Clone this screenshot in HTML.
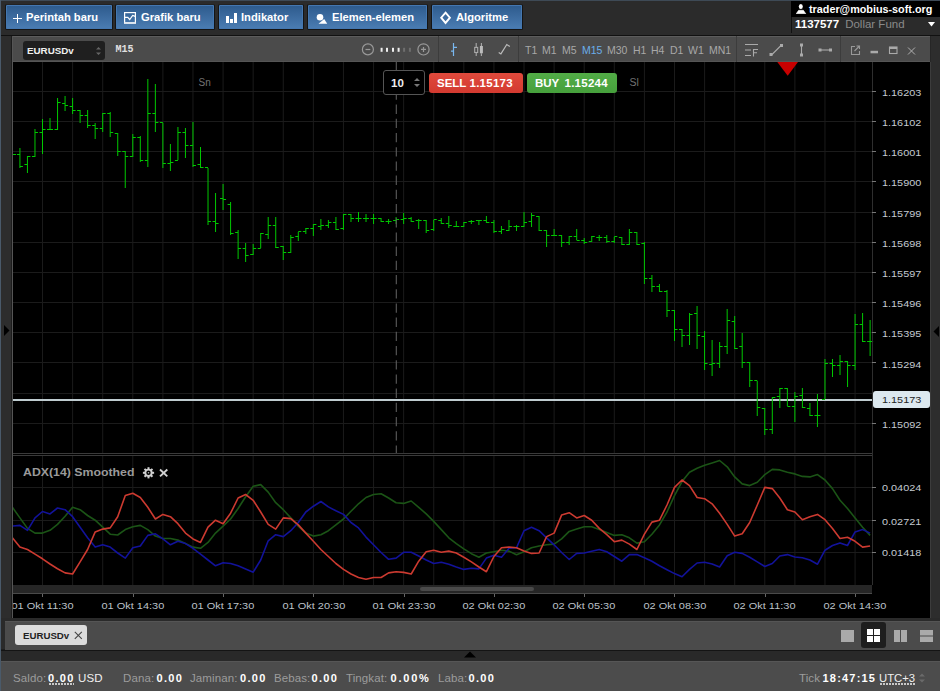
<!DOCTYPE html>
<html><head><meta charset="utf-8">
<style>
*{margin:0;padding:0;box-sizing:border-box}
html,body{width:940px;height:691px;overflow:hidden;background:#2b2b2b;font-family:"Liberation Sans", sans-serif}
.a{position:absolute}
.btn{position:absolute;top:4px;height:26px;border:1px solid #141414;border-top-color:#222;border-radius:2px;box-shadow:inset 0 0 0 1px #4477b0;background:linear-gradient(#2d5a8c,#4b7db3);color:#fff;font-weight:bold;font-size:11.2px;line-height:24px;white-space:nowrap}
.btn span{position:absolute;top:0}
.tf{position:absolute;top:44px;font-size:10.5px;color:#a8a8a8;line-height:12px}
.pl{position:absolute;left:882px;font-size:9.4px;color:#c4cad0;line-height:12px;transform:scaleX(1.16);transform-origin:0 0;white-space:nowrap}
.tl{position:absolute;top:5px;width:80px;text-align:center;font-size:9.4px;color:#bcc2c8;line-height:14px;white-space:nowrap}
.tl span{display:inline-block;transform:scaleX(1.17)}
.st{position:absolute;top:671px;font-size:11.5px;line-height:14px;color:#9c9c9c;white-space:nowrap;letter-spacing:0.1px}
.st b{color:#fff;font-size:11px;letter-spacing:1.3px}
</style></head><body>
<div class="a" style="left:0;top:0;width:940px;height:1px;background:#3e4a56"></div>

<!-- top buttons -->
<div class="btn" style="left:5px;width:108px"><span style="left:20px">Perintah baru</span></div>
<div class="btn" style="left:115px;width:100px"><span style="left:25px">Grafik baru</span></div>
<div class="btn" style="left:218px;width:86px"><span style="left:22px">Indikator</span></div>
<div class="btn" style="left:307px;width:121px"><span style="left:24px">Elemen-elemen</span></div>
<div class="btn" style="left:431px;width:92px"><span style="left:24px">Algoritme</span></div>
<svg class="a" style="left:0;top:0" width="530" height="34">
 <path d="M17.5 14V23M13 18.5H22" stroke="#fff" stroke-width="1"/>
 <rect x="124.6" y="12.6" width="10.8" height="10.6" fill="none" stroke="#fff" stroke-width="1.2"/>
 <path d="M124.5 22.6H135.5" stroke="#dde6f0" stroke-width="1.2"/>
 <path d="M125 17.4H127.8L129.7 19.6L132.7 15.4L135.3 16.4" stroke="#fff" stroke-width="1.2" fill="none"/>
 <g fill="#fff"><rect x="226" y="16" width="3" height="7"/><rect x="230" y="19" width="3" height="4"/><rect x="234" y="13" width="3" height="10"/></g>
 <circle cx="320" cy="17.3" r="3.3" fill="#fff"/><path d="M318.5 23.8H327.2L324.2 19Z" fill="#fff"/>
 <path d="M445.55 12.6L449.9 17.7L445.55 22.9L441.2 17.7Z" fill="none" stroke="#fff" stroke-width="1.9"/>
</svg>

<!-- account box -->
<div class="a" style="left:791px;top:1px;width:149px;height:16px;background:#000"></div>
<div class="a" style="left:791px;top:17px;width:1px;height:16px;background:#111"></div>
<svg class="a" style="left:796px;top:4px" width="11" height="10"><ellipse cx="4.8" cy="2.6" rx="2" ry="2.5" fill="#fff"/><path d="M0.2 9.8L2.6 6.3H7.4L9.8 9.8Z" fill="#fff" stroke="#fff" stroke-width="0.6" stroke-linejoin="round"/></svg>
<div class="a" style="left:809px;top:2px;font-size:10.8px;font-weight:bold;color:#fff;line-height:14px;white-space:nowrap">trader@mobius-soft.org</div>
<div class="a" style="left:795px;top:18px;font-size:11.5px;line-height:13px;white-space:nowrap"><b style="color:#fff">1137577</b><span style="color:#8a8a8a;margin-left:6px">Dollar Fund</span></div>
<svg class="a" style="left:928px;top:22px" width="7" height="5"><path d="M0 0H7L3.5 4.5Z" fill="#fff"/></svg>

<!-- left gutter -->
<div class="a" style="left:1px;top:35px;width:10px;height:584px;background:#2d2d2d"></div>
<div class="a" style="left:11px;top:35px;width:1px;height:584px;background:#1c1c1c"></div>
<div class="a" style="left:12px;top:35px;width:1px;height:584px;background:#555"></div>
<svg class="a" style="left:4px;top:325px" width="6" height="11"><path d="M0 0L5.5 5.5L0 11Z" fill="#000"/></svg>
<!-- right gutter -->
<div class="a" style="left:930px;top:35px;width:1px;height:584px;background:#3c3c3c"></div>
<div class="a" style="left:931px;top:35px;width:9px;height:584px;background:#2d2d2d"></div>
<svg class="a" style="left:933px;top:326px" width="6" height="11"><path d="M6 0L0.5 5.5L6 11Z" fill="#000"/></svg>

<!-- toolbar -->
<div class="a" style="left:1px;top:35px;width:939px;height:1px;background:#111"></div>
<div class="a" style="left:930px;top:36px;width:1px;height:26px;background:#262626"></div>
<div class="a" style="left:13px;top:36px;width:917px;height:26px;background:#4b4b4b;border-top:1px solid #5c5c5c;border-bottom:1px solid #555"></div>
<div class="a" style="left:23px;top:41px;width:82px;height:19px;background:#1f1f1f;border-radius:3px"></div>
<div class="a" style="left:27px;top:44.5px;font-size:9.8px;font-weight:bold;color:#f0f0f0;line-height:12px">EURUSDv</div>
<svg class="a" style="left:95px;top:46px" width="7" height="10"><path d="M1 3.5L3.5 1L6 3.5ZM1 6.5L3.5 9L6 6.5Z" fill="#666"/></svg>
<div class="a" style="left:115.5px;top:43.5px;font-family:'Liberation Mono',monospace;font-size:10px;font-weight:bold;color:#e0e0e0;line-height:12px">M15</div>

<svg class="a" style="left:350px;top:36px" width="590" height="26">
 <g stroke="#999" fill="none" stroke-width="1.2">
  <circle cx="17.9" cy="13.4" r="5.5"/><path d="M15.5 13.5H20.3"/>
  <circle cx="73.5" cy="13.4" r="5.6"/><path d="M71 13.4H76M73.5 11V16"/>
 </g>
 <g fill="#eee"><rect x="30.6" y="11.8" width="2" height="4"/><rect x="36" y="11.8" width="2" height="4"/><rect x="42" y="11.8" width="2" height="4"/><rect x="47.6" y="11.8" width="2" height="4"/></g>
 <g fill="#6e6e6e"><rect x="53.1" y="11.8" width="2" height="4"/><rect x="58.9" y="11.8" width="2" height="4"/></g>
 <path d="M88.5 0V26" stroke="#3c3c3c"/>
 <path d="M103.5 7V20M101 15.2H103.5M103.5 11.4H107" stroke="#7ab8f0" stroke-width="1.2" fill="none"/>
 <g stroke="#aaa" fill="none" stroke-width="1.1"><path d="M126.2 7V11.4M126.2 16.5V20M131.4 7V10M131.4 17.3V20"/><rect x="124.7" y="11.4" width="3" height="5.1"/></g>
 <rect x="129.9" y="10" width="3" height="7.3" fill="#bbb"/>
 <path d="M148.7 16.5L150.9 17.9L156.8 8.5L159.8 10.5" stroke="#bbb" stroke-width="1.2" fill="none"/>
 <path d="M168.5 0V26" stroke="#3c3c3c"/>
 <path d="M386.5 0V26" stroke="#3c3c3c"/>
 <g stroke="#aaa" fill="none" stroke-width="1.1">
  <path d="M395 8.5H408M395 14H401M395 19.5H401"/>
  <path d="M421.5 19L431 9.5"/>
  <path d="M451.5 9V19"/>
  <path d="M470 14H481"/>
  <path d="M403.5 20.5V13.5H408M403.5 16.8H407"/>
 </g>
 <g fill="#aaa">
  <rect x="419.5" y="17" width="3" height="3"/><rect x="430" y="8" width="3" height="3"/>
  <rect x="450" y="7.5" width="3" height="3"/><rect x="450" y="17.5" width="3" height="3"/>
  <rect x="468.5" y="12.5" width="3" height="3"/><rect x="479" y="12.5" width="3" height="3"/>
 </g>
 <path d="M490.5 0V26" stroke="#3c3c3c"/>
 <g stroke="#999" fill="none" stroke-width="1.1">
  <path d="M505 10.5H501.5V18.5H509.5V15"/><path d="M504.5 15L509.5 10M506.5 10H509.5V13"/>
  <path d="M558 11.5L565 18.5M565 11.5L558 18.5" stroke="#b0b0b0" stroke-width="1"/>
 </g>
 <rect x="520.5" y="14.8" width="7.5" height="2.5" fill="#aaa"/>
 <rect x="539.5" y="11" width="7.5" height="6.5" fill="none" stroke="#aaa" stroke-width="1.1"/><rect x="539.5" y="11" width="7.5" height="2" fill="#aaa"/>
</svg>
<div class="tf" style="left:525px">T1</div>
<div class="tf" style="left:542px">M1</div>
<div class="tf" style="left:562px">M5</div>
<div class="tf" style="left:582px;color:#6aaeea">M15</div>
<div class="tf" style="left:607px">M30</div>
<div class="tf" style="left:633px">H1</div>
<div class="tf" style="left:651px">H4</div>
<div class="tf" style="left:670px">D1</div>
<div class="tf" style="left:688px">W1</div>
<div class="tf" style="left:709px">MN1</div>

<!-- chart black area -->
<div class="a" style="left:13px;top:62px;width:917px;height:556px;background:#000"></div>
<svg class="a" style="left:0;top:0" width="940" height="691">
<defs><clipPath id="ic"><rect x="13" y="456" width="859" height="129"/></clipPath></defs>
<path d="M42.5 62V453 M42.5 456V585 M72.6 62V453 M72.6 456V585 M102.69 62V453 M102.69 456V585 M132.79 62V453 M132.79 456V585 M162.88 62V453 M162.88 456V585 M192.98 62V453 M192.98 456V585 M223.07 62V453 M223.07 456V585 M253.17 62V453 M253.17 456V585 M283.26 62V453 M283.26 456V585 M313.36 62V453 M313.36 456V585 M343.45 62V453 M343.45 456V585 M373.55 62V453 M373.55 456V585 M403.64 62V453 M403.64 456V585 M433.74 62V453 M433.74 456V585 M463.83 62V453 M463.83 456V585 M493.93 62V453 M493.93 456V585 M524.02 62V453 M524.02 456V585 M554.12 62V453 M554.12 456V585 M584.21 62V453 M584.21 456V585 M614.31 62V453 M614.31 456V585 M644.4 62V453 M644.4 456V585 M674.5 62V453 M674.5 456V585 M704.59 62V453 M704.59 456V585 M734.69 62V453 M734.69 456V585 M764.78 62V453 M764.78 456V585 M794.88 62V453 M794.88 456V585 M824.98 62V453 M824.98 456V585 M855.07 62V453 M855.07 456V585 M13 91.5H872 M13 121.5H872 M13 151.5H872 M13 181.5H872 M13 212.5H872 M13 242.5H872 M13 272.5H872 M13 302.5H872 M13 332.5H872 M13 362.5H872 M13 393.5H872 M13 423.5H872 M13 487.5H872 M13 520.5H872 M13 552.5H872" stroke="#1b1b1b" stroke-width="1" fill="none"/>
<path d="M13 400.1H872" stroke="#bfccd0" stroke-width="2"/>
<path d="M13 154.5H16M19.93 148V168M16.93 154.5H19.93M19.93 166.5H22.93M27.45 156V173M24.45 164.5H27.45M27.45 156.5H30.45M34.98 129V157M31.979999999999997 156.5H34.98M34.98 132.5H37.98M42.5 119V154M39.5 132.5H42.5M42.5 129.5H45.5M50.02 118V130M47.02 129.5H50.02M50.02 129.5H53.02M57.55 98V130M54.55 129.5H57.55M57.55 102.5H60.55M65.07 96V111M62.06999999999999 103.5H65.07M65.07 105.5H68.07M72.6 98V114M69.6 106.5H72.6M72.6 110.5H75.6M80.12 110V123M77.12 110.5H80.12M80.12 115.5H83.12M87.64 110V128M84.64 115.5H87.64M87.64 125.5H90.64M95.17 123V139M92.17 125.5H95.17M95.17 128.5H98.17M102.69 113V132M99.69 128.5H102.69M102.69 113.5H105.69M110.21 112V137M107.21 113.5H110.21M110.21 132.5H113.21M117.74 133V156M114.74 133.5H117.74M117.74 151.5H120.74M125.26 151V188M122.26 151.5H125.26M125.26 156.5H128.26M132.79 134V157M129.79 156.5H132.79M132.79 137.5H135.79M140.31 136V162M137.31 137.5H140.31M140.31 160.5H143.31M147.83 79V167M144.83 160.5H147.83M147.83 113.5H150.83M155.36 84V132M152.36 113.5H155.36M155.36 122.5H158.36M162.88 123V168M159.88 122.5H162.88M162.88 163.5H165.88M170.4 144V171M167.4 163.5H170.4M170.4 162.5H173.4M177.93 127V160M174.93 160.5H177.93M177.93 132.5H180.93M185.45 128V158M182.45 132.5H185.45M185.45 145.5H188.45M192.98 122V167M189.98 145.5H192.98M192.98 165.5H195.98M200.5 147V168M197.5 164.5H200.5M200.5 167.5H203.5M208.02 168V225M205.02 167.5H208.02M208.02 221.5H211.02M215.55 193V232M212.55 221.5H215.55M215.55 223.5H218.55M223.07 184V210M220.07 198.5H223.07M223.07 199.5H226.07M230.59 202V235M227.59 204.5H230.59M230.59 233.5H233.59M238.12 230V259M235.12 232.5H238.12M238.12 248.5H241.12M245.64 243V262M242.64 248.5H245.64M245.64 255.5H248.64M253.17 244V255M250.17 254.5H253.17M253.17 248.5H256.16999999999996M260.69 233V248M257.69 248.5H260.69M260.69 233.5H263.69M268.21 217V239M265.21 234.5H268.21M268.21 225.5H271.21M275.74 217V248M272.74 225.5H275.74M275.74 247.5H278.74M283.26 246V260M280.26 246.5H283.26M283.26 252.5H286.26M290.79 235V253M287.79 252.5H290.79M290.79 237.5H293.79M298.31 232V241M295.31 236.5H298.31M298.31 231.5H301.31M305.83 228V234M302.83 231.5H305.83M305.83 228.5H308.83M313.36 224V236M310.36 228.5H313.36M313.36 224.5H316.36M320.88 219V230M317.88 226.5H320.88M320.88 225.5H323.88M328.4 220V228M325.4 225.5H328.4M328.4 222.5H331.4M335.93 217V230M332.93 222.5H335.93M335.93 229.5H338.93M343.45 214V230M340.45 228.5H343.45M343.45 214.5H346.45M350.98 214V222M347.98 214.5H350.98M350.98 218.5H353.98M358.5 212V222M355.5 218.5H358.5M358.5 218.5H361.5M366.02 214V222M363.02 218.5H366.02M366.02 218.5H369.02M373.55 214V224M370.55 218.5H373.55M373.55 218.5H376.55M381.07 218V222M378.07 218.5H381.07M381.07 221.5H384.07M388.59 219V224M385.59 221.5H388.59M388.59 221.5H391.59M396.12 217V224M393.12 220.5H396.12M396.12 219.5H399.12M403.64 213V224M400.64 219.5H403.64M403.64 218.5H406.64M411.17 217V222M408.17 218.5H411.17M411.17 221.5H414.17M418.69 219V229M415.69 220.5H418.69M418.69 220.5H421.69M426.21 220V233M423.21 220.5H426.21M426.21 230.5H429.21M433.74 220V231M430.74 229.5H433.74M433.74 219.5H436.74M441.26 218V224M438.26 220.5H441.26M441.26 223.5H444.26M448.79 216V228M445.79 223.5H448.79M448.79 225.5H451.79M456.31 221V227M453.31 226.5H456.31M456.31 226.5H459.31M463.83 222V227M460.83 226.5H463.83M463.83 222.5H466.83M471.36 220V224M468.36 221.5H471.36M471.36 221.5H474.36M478.88 220V225M475.88 220.5H478.88M478.88 220.5H481.88M486.4 216V223M483.4 220.5H486.4M486.4 222.5H489.4M493.93 220V233M490.93 222.5H493.93M493.93 231.5H496.93M501.45 226V234M498.45 231.5H501.45M501.45 229.5H504.45M508.98 220V231M505.98 230.5H508.98M508.98 226.5H511.98M516.5 225V231M513.5 226.5H516.5M516.5 226.5H519.5M524.02 212V227M521.02 226.5H524.02M524.02 222.5H527.02M531.55 213V227M528.55 221.5H531.55M531.55 215.5H534.55M539.07 216V231M536.07 216.5H539.07M539.07 230.5H542.07M546.59 230V247M543.59 230.5H546.59M546.59 235.5H549.59M554.12 229V236M551.12 235.5H554.12M554.12 235.5H557.12M561.64 235V247M558.64 235.5H561.64M561.64 242.5H564.64M569.17 236V245M566.17 242.5H569.17M569.17 236.5H572.17M576.69 229V240M573.69 236.5H576.69M576.69 240.5H579.69M584.21 238V244M581.21 240.5H584.21M584.21 242.5H587.21M591.74 236V242M588.74 241.5H591.74M591.74 236.5H594.74M599.26 235V241M596.26 237.5H599.26M599.26 237.5H602.26M606.78 235V243M603.78 237.5H606.78M606.78 241.5H609.78M614.31 237V243M611.31 241.5H614.31M614.31 236.5H617.31M621.83 237V245M618.83 237.5H621.83M621.83 244.5H624.83M629.36 229V245M626.36 244.5H629.36M629.36 232.5H632.36M636.88 232V245M633.88 232.5H636.88M636.88 244.5H639.88M644.4 242V284M641.4 243.5H644.4M644.4 278.5H647.4M651.93 275V292M648.93 278.5H651.93M651.93 286.5H654.93M659.45 284V292M656.45 286.5H659.45M659.45 291.5H662.45M666.98 290V317M663.98 291.5H666.98M666.98 310.5H669.98M674.5 310V341M671.5 310.5H674.5M674.5 329.5H677.5M682.02 329V347M679.02 329.5H682.02M682.02 335.5H685.02M689.55 313V345M686.55 335.5H689.55M689.55 314.5H692.55M697.07 306V349M694.07 313.5H697.07M697.07 335.5H700.07M704.59 331V370M701.59 336.5H704.59M704.59 363.5H707.59M712.12 340V376M709.12 364.5H712.12M712.12 363.5H715.12M719.64 342V368M716.64 363.5H719.64M719.64 346.5H722.64M727.17 309V354M724.17 346.5H727.17M727.17 320.5H730.17M734.69 316V349M731.69 321.5H734.69M734.69 348.5H737.69M742.21 333V368M739.21 346.5H742.21M742.21 362.5H745.21M749.74 362V387M746.74 362.5H749.74M749.74 380.5H752.74M757.26 381V416M754.26 380.5H757.26M757.26 407.5H760.26M764.78 408V435M761.78 408.5H764.78M764.78 429.5H767.78M772.31 397V434M769.31 429.5H772.31M772.31 397.5H775.31M779.83 388V408M776.83 396.5H779.83M779.83 388.5H782.83M787.36 388V406M784.36 388.5H787.36M787.36 406.5H790.36M794.88 392V422M791.88 406.5H794.88M794.88 396.5H797.88M802.4 388V408M799.4 395.5H802.4M802.4 407.5H805.4M809.93 403V416M806.93 408.5H809.93M809.93 415.5H812.93M817.45 394V427M814.45 415.5H817.45M817.45 415.5H820.45M824.98 359V399M821.98 399.5H824.98M824.98 363.5H827.98M832.5 359V377M829.5 363.5H832.5M832.5 365.5H835.5M840.02 355V375M837.02 365.5H840.02M840.02 361.5H843.02M847.55 361V387M844.55 361.5H847.55M847.55 365.5H850.55M855.07 314V370M852.07 365.5H855.07M855.07 324.5H858.07M862.59 313V342M859.59 324.5H862.59M862.59 341.5H865.59M870.12 320V356M867.12 341.5H870.12M870.12 341.5H873.12" stroke="#00c800" stroke-width="1" fill="none"/>
<g clip-path="url(#ic)">
<polyline points="12.4,507.3 19.9,517.9 27.5,528.4 35.0,533.1 42.5,533.1 50.0,530.3 57.5,524.4 65.1,516.2 72.6,507.3 80.1,509.7 87.6,515.5 95.2,520.2 102.7,527.2 110.2,534.2 117.7,535.0 125.3,529.6 132.8,526.8 140.3,525.4 147.8,529.6 155.4,536.1 162.9,538.5 170.4,538.5 177.9,540.1 185.5,543.6 193.0,547.1 200.5,548.3 208.0,542.4 215.5,533.1 223.1,526.1 230.6,519.0 238.1,508.5 245.6,496.8 253.2,486.3 260.7,484.6 268.2,492.1 275.7,502.7 283.3,509.7 290.8,517.9 298.3,526.1 305.8,533.1 313.4,536.1 320.9,534.7 328.4,530.7 335.9,524.9 343.5,519.0 351.0,511.3 358.5,503.8 366.0,497.5 373.5,494.5 381.1,493.8 388.6,498.0 396.1,502.7 403.6,503.4 411.2,501.0 418.7,507.3 426.2,513.9 433.7,521.4 441.3,529.6 448.8,537.8 456.3,543.6 463.8,548.8 471.4,553.7 478.9,557.2 486.4,553.0 493.9,551.8 501.5,550.2 509.0,551.1 516.5,554.8 524.0,551.8 531.5,547.8 539.1,546.0 546.6,544.8 554.1,544.1 561.6,538.9 569.2,531.4 576.7,529.1 584.2,526.8 591.7,526.8 599.3,529.6 606.8,532.4 614.3,535.4 621.8,534.7 629.4,537.8 636.9,543.1 644.4,541.7 651.9,534.2 659.5,524.9 667.0,512.0 674.5,495.6 682.0,481.6 689.5,472.2 697.1,468.3 704.6,465.2 712.1,462.9 719.6,460.5 727.2,466.8 734.7,476.9 742.2,483.9 749.7,485.6 757.3,482.3 764.8,474.6 772.3,469.4 779.8,469.9 787.4,472.2 794.9,473.9 802.4,476.4 809.9,476.9 817.5,474.6 825.0,480.0 832.5,488.6 840.0,500.3 847.5,508.5 855.1,517.9 862.6,527.2 870.1,535.4" stroke="#1b5416" stroke-width="1.6" fill="none" stroke-linejoin="round"/>
<polyline points="12.4,526.1 19.9,525.4 27.5,530.3 35.0,517.9 42.5,511.5 50.0,513.9 57.5,508.0 65.1,509.7 72.6,516.7 80.1,527.2 87.6,537.8 95.2,547.1 102.7,544.8 110.2,547.1 117.7,553.0 125.3,558.1 132.8,547.8 140.3,546.0 147.8,535.4 155.4,533.8 162.9,538.9 170.4,544.8 177.9,541.3 185.5,543.6 193.0,548.3 200.5,554.1 208.0,560.0 215.5,565.8 223.1,562.8 230.6,563.5 238.1,565.8 245.6,568.9 253.2,572.2 260.7,560.0 268.2,540.8 275.7,534.7 283.3,536.6 290.8,530.7 298.3,522.5 305.8,512.0 313.4,506.2 320.9,501.5 328.4,506.9 335.9,510.8 343.5,514.4 351.0,522.5 358.5,527.9 366.0,537.1 373.5,544.8 381.1,552.5 388.6,559.3 396.1,558.1 403.6,552.3 411.2,552.3 418.7,556.0 426.2,560.0 433.7,563.5 441.3,562.3 448.8,564.2 456.3,567.0 463.8,569.4 471.4,568.2 478.9,568.9 486.4,558.1 493.9,555.3 501.5,557.2 509.0,548.3 516.5,547.8 524.0,530.7 531.5,527.2 539.1,530.7 546.6,537.8 554.1,544.8 561.6,552.5 569.2,559.5 576.7,553.4 584.2,553.0 591.7,551.3 599.3,549.5 606.8,551.8 614.3,556.5 621.8,561.2 629.4,554.6 636.9,554.6 644.4,557.7 651.9,561.2 659.5,565.8 667.0,569.8 674.5,573.6 682.0,576.8 689.5,569.4 697.1,563.0 704.6,562.3 712.1,564.0 719.6,567.0 727.2,555.8 734.7,552.3 742.2,553.4 749.7,557.2 757.3,561.9 764.8,566.5 772.3,563.5 779.8,556.0 787.4,554.6 794.9,557.0 802.4,557.7 809.9,560.0 817.5,564.2 825.0,550.2 832.5,545.5 840.0,542.9 847.5,545.5 855.1,531.9 862.6,529.6 870.1,533.1" stroke="#12129a" stroke-width="1.6" fill="none" stroke-linejoin="round"/>
<polyline points="12.4,537.8 19.9,547.1 27.5,549.5 35.0,554.1 42.5,558.8 50.0,564.0 57.5,568.7 65.1,572.9 72.6,574.0 80.1,561.9 87.6,549.5 95.2,531.9 102.7,529.1 110.2,527.9 117.7,516.7 125.3,495.6 132.8,493.3 140.3,497.5 147.8,507.3 155.4,519.0 162.9,514.4 170.4,516.7 177.9,523.7 185.5,533.1 193.0,538.9 200.5,542.4 208.0,527.2 215.5,520.2 223.1,523.7 230.6,513.2 238.1,498.0 245.6,494.5 253.2,500.3 260.7,512.0 268.2,524.4 275.7,529.1 283.3,517.9 290.8,518.6 298.3,524.9 305.8,533.1 313.4,541.3 320.9,549.5 328.4,556.5 335.9,563.5 343.5,569.4 351.0,574.0 358.5,577.5 366.0,579.2 373.5,577.5 381.1,577.5 388.6,572.9 396.1,571.7 403.6,572.4 411.2,574.0 418.7,561.2 426.2,551.8 433.7,550.2 441.3,552.3 448.8,551.1 456.3,553.0 463.8,557.2 471.4,561.9 478.9,567.0 486.4,571.7 493.9,556.5 501.5,547.8 509.0,547.1 516.5,547.8 524.0,551.1 531.5,553.4 539.1,553.0 546.6,536.6 554.1,533.1 561.6,515.1 569.2,512.7 576.7,517.9 584.2,515.5 591.7,520.2 599.3,528.4 606.8,534.7 614.3,541.7 621.8,540.1 629.4,544.1 636.9,549.5 644.4,534.2 651.9,522.1 659.5,520.2 667.0,505.0 674.5,487.4 682.0,480.0 689.5,485.6 697.1,497.5 704.6,498.7 712.1,503.8 719.6,513.2 727.2,524.4 734.7,536.1 742.2,533.8 749.7,522.5 757.3,505.0 764.8,487.4 772.3,488.6 779.8,498.0 787.4,509.7 794.9,512.0 802.4,519.7 809.9,516.7 817.5,514.4 825.0,519.7 832.5,528.4 840.0,538.5 847.5,537.3 855.1,541.3 862.6,547.1 870.1,546.0" stroke="#cc3a30" stroke-width="1.6" fill="none" stroke-linejoin="round"/>
</g>
<path d="M13 453.5H872M13 455.5H872" stroke="#3a3a3a"/>
<path d="M872.5 62V585" stroke="#2e2e2e"/>
<path d="M872 91.5H876M872 121.5H876M872 151.5H876M872 181.5H876M872 212.5H876M872 242.5H876M872 272.5H876M872 302.5H876M872 332.5H876M872 362.5H876M872 423.5H876M872 487.5H876M872 520.5H876M872 552.5H876" stroke="#777"/>
<path d="M396.3 62V453" stroke="#5c5c5c" stroke-width="1.1" stroke-dasharray="9.3 4.9"/>
<path d="M777.3 62H798L787.7 75.8Z" fill="#c80000"/>
<rect x="13" y="585" width="859" height="8" fill="#262626"/>
<path d="M13 593.5H872" stroke="#4a4a4a"/>
<rect x="420" y="587" width="114" height="4" rx="2" fill="#4a4a4a"/>
<path d="M42.5 594V597M133.5 594V597M223.5 594V597M313.5 594V597M404.5 594V597M494.5 594V597M584.5 594V597M674.5 594V597M765.5 594V597M855.5 594V597" stroke="#666"/>
</svg>
<div class="pl" style="top:86.9px">1.16203</div><div class="pl" style="top:117.1px">1.16102</div><div class="pl" style="top:147.3px">1.16001</div><div class="pl" style="top:177.4px">1.15900</div><div class="pl" style="top:207.6px">1.15799</div><div class="pl" style="top:237.8px">1.15698</div><div class="pl" style="top:268.0px">1.15597</div><div class="pl" style="top:298.2px">1.15496</div><div class="pl" style="top:328.3px">1.15395</div><div class="pl" style="top:358.5px">1.15294</div><div class="pl" style="top:418.9px">1.15092</div><div class="pl" style="top:482.4px">0.04024</div><div class="pl" style="top:515.8px">0.02721</div><div class="pl" style="top:547.2px">0.01418</div>
<div class="a" style="left:873px;top:391px;width:57px;height:17px;background:#dce8ee;border-radius:3px"></div>
<div class="pl" style="top:394px;color:#222">1.15173</div>
<div class="a" style="left:198.5px;top:76.5px;font-size:10px;color:#737373;line-height:12px">Sn</div>
<div class="a" style="left:629.5px;top:75.5px;font-size:10.5px;color:#737373;line-height:12px">Sl</div>
<div class="a" style="left:23px;top:465px;font-size:11.2px;font-weight:bold;color:#9a9a9a;line-height:14px;transform:scaleX(1.1);transform-origin:0 0;white-space:nowrap">ADX(14) Smoothed</div>
<svg class="a" style="left:142px;top:466px" width="30" height="14">
 <g transform="translate(6.5 6.8)" fill="#d0d0d0">
  <circle r="4.1"/>
  <g id="th"><rect x="-1" y="-5.6" width="2" height="2.5"/><rect x="-1" y="3.1" width="2" height="2.5"/><rect x="-5.6" y="-1" width="2.5" height="2"/><rect x="3.1" y="-1" width="2.5" height="2"/></g>
  <use href="#th" transform="rotate(45)"/>
  <circle r="2.2" fill="#000"/><circle r="0.8" fill="#bbb"/>
 </g>
 <path d="M18 3.5L25.3 10.4M25.3 3.5L18 10.4" stroke="#d0d0d0" stroke-width="1.9"/>
</svg>
<div class="a" style="left:13px;top:594px;width:917px;height:24px;overflow:hidden"><div class="tl" style="left:-10.5px"><span>01 Okt 11:30</span></div><div class="tl" style="left:79.8px"><span>01 Okt 14:30</span></div><div class="tl" style="left:170.1px"><span>01 Okt 17:30</span></div><div class="tl" style="left:260.4px"><span>01 Okt 20:30</span></div><div class="tl" style="left:350.6px"><span>01 Okt 23:30</span></div><div class="tl" style="left:440.9px"><span>02 Okt 02:30</span></div><div class="tl" style="left:531.2px"><span>02 Okt 05:30</span></div><div class="tl" style="left:621.5px"><span>02 Okt 08:30</span></div><div class="tl" style="left:711.8px"><span>02 Okt 11:30</span></div><div class="tl" style="left:802.1px"><span>02 Okt 14:30</span></div></div>

<!-- order widget -->
<div class="a" style="left:383px;top:70px;width:42px;height:25px;background:#000;border:1px solid #555;border-radius:3px"></div>
<div class="a" style="left:391px;top:76px;font-size:11.5px;font-weight:bold;color:#eee;line-height:14px">10</div>
<svg class="a" style="left:414px;top:77px" width="6" height="11"><path d="M0 4L3 1L6 4ZM0 7L3 10L6 7Z" fill="#777"/></svg>
<div class="a" style="left:429px;top:73px;width:94px;height:20px;background:linear-gradient(#e04a3c,#d33a30);border-radius:3px;color:#fff;font-weight:bold;font-size:11.5px;line-height:20px;white-space:nowrap"><span style="position:absolute;left:8px">SELL</span><span style="position:absolute;left:40.5px;letter-spacing:0.25px">1.15173</span></div>
<div class="a" style="left:527px;top:73px;width:90px;height:20px;background:linear-gradient(#52ac46,#46a03c);border-radius:3px;color:#fff;font-weight:bold;font-size:11.5px;line-height:20px;white-space:nowrap"><span style="position:absolute;left:8px">BUY</span><span style="position:absolute;left:37.5px;letter-spacing:0.25px">1.15244</span></div>

<!-- tabs bar -->
<div class="a" style="left:1px;top:618px;width:939px;height:32px;background:#2a2a2a;border-bottom:1px solid #1e1e1e"></div>
<div class="a" style="left:5px;top:621px;width:935px;height:29px;background:#4b4b4b;border-top:1px solid #555"></div>
<div class="a" style="left:15px;top:625px;width:72px;height:20px;background:#dcdcdc;border-radius:3px"></div>
<div class="a" style="left:22.5px;top:629.5px;font-size:9.3px;font-weight:bold;color:#222;line-height:12px;transform:scaleX(1.04);transform-origin:0 0">EURUSDv</div>
<svg class="a" style="left:74px;top:631px" width="9" height="9"><path d="M0.8 0.8L7.8 7.8M7.8 0.8L0.8 7.8" stroke="#444" stroke-width="1.1"/></svg>
<div class="a" style="left:841px;top:630px;width:13px;height:12px;background:#aaa"></div>
<div class="a" style="left:861px;top:622px;width:25px;height:26px;background:#1e1e1e;border-radius:3px"></div>
<svg class="a" style="left:867px;top:629px" width="13" height="13"><g fill="#fff"><rect x="0" y="0" width="6" height="6"/><rect x="7" y="0" width="6" height="6"/><rect x="0" y="7" width="6" height="6"/><rect x="7" y="7" width="6" height="6"/></g></svg>
<svg class="a" style="left:894px;top:630px" width="13" height="12"><g fill="#aaa"><rect x="0" y="0" width="6" height="12"/><rect x="7" y="0" width="6" height="12"/></g></svg>
<svg class="a" style="left:920px;top:630px" width="13" height="12"><g fill="#aaa"><rect x="0" y="0" width="13" height="5.5"/><rect x="0" y="6.5" width="13" height="5.5"/></g></svg>

<div class="a" style="left:0;top:650px;width:940px;height:11px;background:#292929;border-top:1px solid #141414"></div>
<svg class="a" style="left:464px;top:651px" width="12" height="7"><path d="M0 6.5L6 0.5L12 6.5Z" fill="#000"/></svg>

<!-- status bar -->
<div class="a" style="left:0;top:661px;width:940px;height:30px;background:#4c4c4c;border-top:1px solid #565656"></div>
<div class="st" style="left:13px">Saldo:</div>
<div class="st" style="left:48px"><b>0.00</b></div>
<div class="a" style="left:49px;top:683px;width:25px;height:2px;background:repeating-linear-gradient(90deg,#c8c8c8 0 2px,transparent 2px 3px)"></div>
<div class="st" style="left:78px;color:#f0f0f0">USD</div>
<div class="st" style="left:123px">Dana:</div>
<div class="st" style="left:156.5px"><b>0.00</b></div>
<div class="st" style="left:190px">Jaminan:</div>
<div class="st" style="left:240px"><b>0.00</b></div>
<div class="st" style="left:274px">Bebas:</div>
<div class="st" style="left:311.5px"><b>0.00</b></div>
<div class="st" style="left:346px">Tingkat:</div>
<div class="st" style="left:390.5px"><b style="letter-spacing:1.8px">0.00%</b></div>
<div class="st" style="left:438px">Laba:</div>
<div class="st" style="left:468.5px"><b>0.00</b></div>
<div class="st" style="left:799px">Tick</div>
<div class="st" style="left:822.5px"><b style="letter-spacing:1.2px">18:47:15</b></div>
<div class="st" style="left:879px;color:#f0f0f0;font-size:11.3px;letter-spacing:0">UTC+3</div>
<div class="a" style="left:880px;top:683px;width:36px;height:2px;background:repeating-linear-gradient(90deg,#c8c8c8 0 2px,transparent 2px 3px)"></div>
<svg class="a" style="left:919px;top:673px" width="6" height="10"><path d="M0 3.5L3 0.5L6 3.5ZM0 6.5L3 9.5L6 6.5Z" fill="#6a6a6a"/></svg>
<div class="a" style="left:0;top:0;width:1px;height:691px;background:#4a5a6a"></div>
</body></html>
